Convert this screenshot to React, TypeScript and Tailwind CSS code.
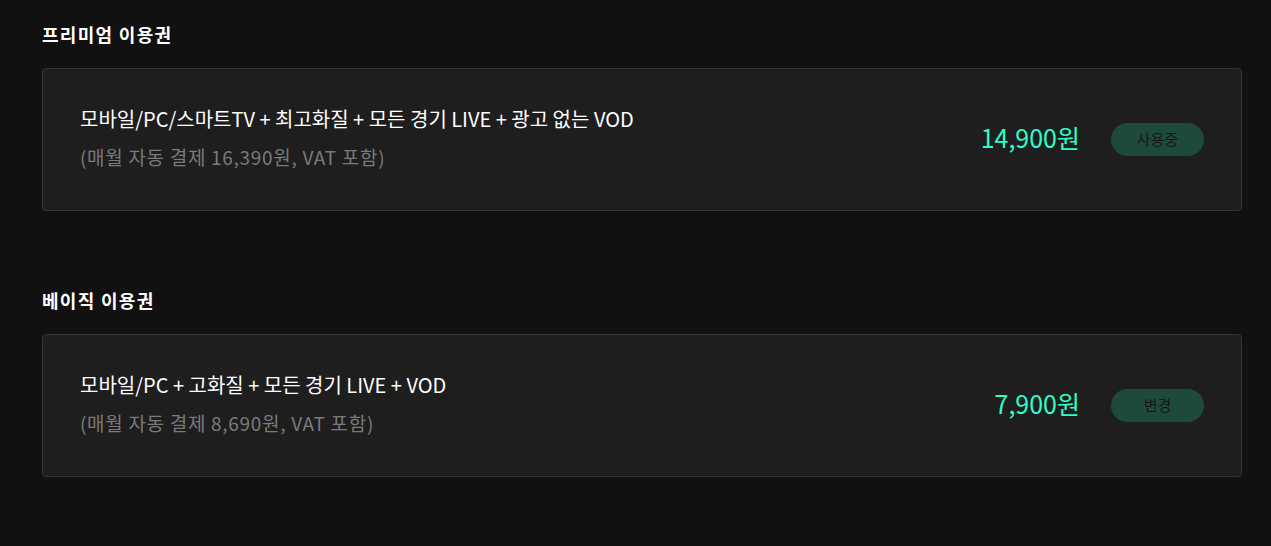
const plans = [
  {
    title: "프리미엄 이용권",
    desc: "모바일/PC/스마트TV + 최고화질 + 모든 경기 LIVE + 광고 없는 VOD",
    sub: "(매월 자동 결제 16,390원, VAT 포함)",
    price: "14,900원",
    action: "사용중",
  },
  {
    title: "베이직 이용권",
    desc: "모바일/PC + 고화질 + 모든 경기 LIVE + VOD",
    sub: "(매월 자동 결제 8,690원, VAT 포함)",
    price: "7,900원",
    action: "변경",
  },
];

export default function App() {
  return (
    <div
      className="min-h-screen w-full bg-[#111111] px-[42px] pt-[21px]"
      style={{ fontFamily: '"Noto Sans CJK KR", "Noto Sans", sans-serif' }}
    >
      <div className="flex w-[1200px] flex-col gap-[76px]">
        {plans.map((p) => (
          <section key={p.title} className="flex flex-col">
            <h2 className="text-[18px] font-bold leading-[26px] tracking-[1.3px] text-white">
              {p.title}
            </h2>
            <div className="mt-[21px] flex h-[143px] items-center justify-between rounded-[4px] border border-[#353535] bg-[#1e1e1e] pl-[37px] pr-[37px]">
              <div className="flex flex-col gap-[10px] pb-[4px]">
                <p className="text-[20px] leading-[28px] text-white">{p.desc}</p>
                <p className="text-[19px] leading-[28px] tracking-[0.7px] text-[#7a7a7a]">
                  {p.sub}
                </p>
              </div>
              <div className="flex items-center gap-[31px]">
                <span className="pb-[6px] text-[25px] leading-[32px] text-[#2affc6]">
                  {p.price}
                </span>
                <button className="h-[33px] w-[93px] rounded-full bg-[#1e4a3d] text-[15px] text-[#161616]">
                  {p.action}
                </button>
              </div>
            </div>
          </section>
        ))}
      </div>
    </div>
  );
}
